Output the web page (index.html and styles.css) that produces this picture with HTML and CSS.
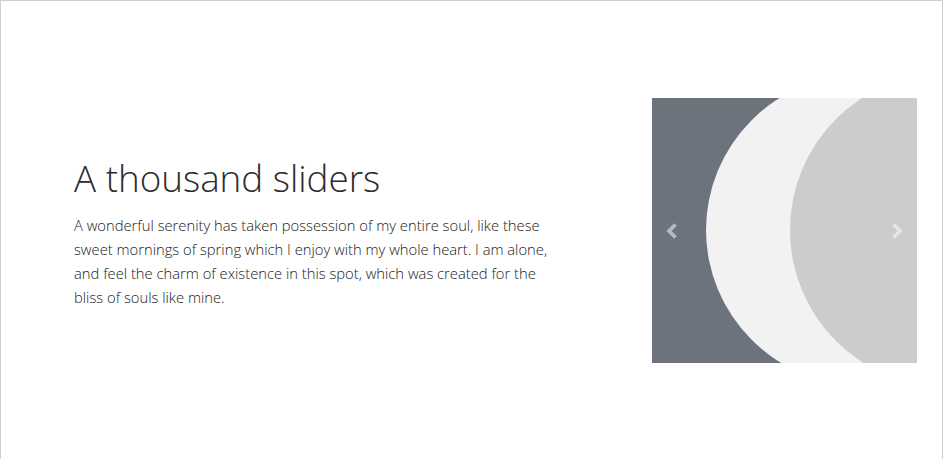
FILE: index.html
```html
<!DOCTYPE html>
<html lang="en">
<head>
<meta charset="utf-8">
<title>A thousand sliders</title>
<link rel="stylesheet" href="styles.css">
</head>
<body>
<div class="frame">
  <section class="hero">
    <div class="hero-text">
      <h1 class="hero-title">A thousand sliders</h1>
      <p class="hero-copy">A wonderful serenity has taken possession of my entire soul, like these sweet mornings of spring which I enjoy with my whole heart. I am alone, and feel the charm of existence in this spot, which was created for the bliss of souls like mine.</p>
    </div>
    <div class="slider">
      <svg class="slide" viewBox="0 0 265 265" width="265" height="265" aria-hidden="true">
        <rect width="265" height="265" fill="#6c737c"/>
        <circle cx="209" cy="132" r="155" fill="#f2f2f2"/>
        <circle cx="295" cy="132" r="157" fill="#cccccc"/>
      </svg>
      <button class="arrow arrow-prev" aria-label="Previous">
        <svg viewBox="0 0 13 17" width="13" height="17"><path d="M10.5 2 L4 8.5 L10.5 15" fill="none" stroke="#fff" stroke-width="3.8"/></svg>
      </button>
      <button class="arrow arrow-next" aria-label="Next">
        <svg viewBox="0 0 13 17" width="13" height="17"><path d="M2.5 2 L9 8.5 L2.5 15" fill="none" stroke="#fff" stroke-width="3.8"/></svg>
      </button>
    </div>
  </section>
</div>
</body>
</html>
```
FILE: styles.css
```css
* { box-sizing: border-box; }
html, body { margin: 0; padding: 0; background: #fff; }
body { font-family: "Open Sans", "Noto Sans", sans-serif; color: #333; }
.frame {
  border: 1px solid #cfcfcf;
  height: 461px;
  display: flex;
  flex-direction: column;
  justify-content: center;
}
.hero {
  display: flex;
  align-items: center;
  justify-content: space-between;
  padding: 0 25px 0 73px;
}
.hero-text { width: 482px; padding-top: 6px; }
.hero-title {
  margin: -4px 0 12px;
  font-size: 36.8px;
  font-weight: 300;
  line-height: 46px;
  color: #2b2b2b;
}
.hero-copy {
  margin: 0;
  font-size: 14.75px;
  font-weight: 300;
  line-height: 24px;
  color: #222;
}
.slider { position: relative; width: 265px; height: 265px; }
.slide { display: block; }
.arrow {
  position: absolute;
  top: 50%;
  transform: translateY(-50%);
  background: none;
  border: 0;
  padding: 0;
  opacity: 0.5;
  line-height: 0;
}
.arrow-prev { left: 13px; }
.arrow-next { right: 13px; }
```
